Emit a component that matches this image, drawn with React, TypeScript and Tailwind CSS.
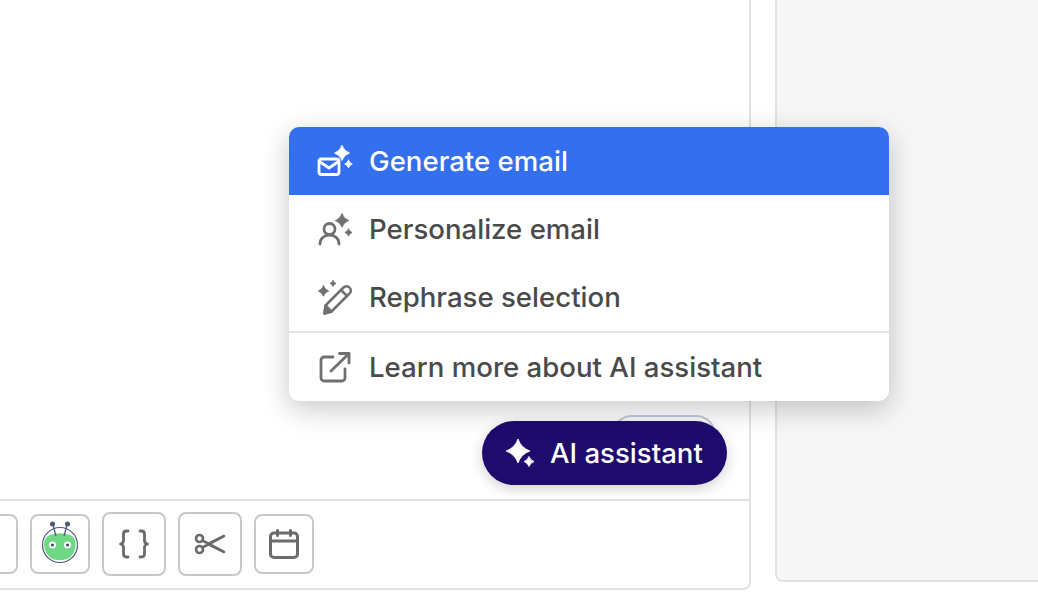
const Sparkle = ({ cx, cy, r }: { cx: number; cy: number; r: number }) => {
  const k = r * 0.26;
  return (
    <path
      d={`M${cx} ${cy - r}Q${cx + k} ${cy - k} ${cx + r} ${cy}Q${cx + k} ${cy + k} ${cx} ${cy + r}Q${cx - k} ${cy + k} ${cx - r} ${cy}Q${cx - k} ${cy - k} ${cx} ${cy - r}Z`}
      fill="currentColor"
      stroke="currentColor"
      strokeWidth="0.8"
      strokeLinejoin="round"
    />
  );
};

const MailIcon = () => (
  <svg width="40" height="40" viewBox="0 0 40 40" fill="none" stroke="currentColor" strokeWidth="2.8" strokeLinecap="round" strokeLinejoin="round" className="shrink-0">
    <rect x="4" y="18" width="20" height="15.5" rx="2.5" />
    <path d="M4.5 20.5 14 27l9.5-6.5" />
    <Sparkle cx={27} cy={12} r={7.5} />
    <Sparkle cx={33.5} cy={23} r={3.8} />
  </svg>
);

const PersonIcon = () => (
  <svg width="40" height="40" viewBox="0 0 40 40" fill="none" stroke="currentColor" strokeWidth="2.8" strokeLinecap="round" strokeLinejoin="round" className="shrink-0">
    <circle cx="14.5" cy="20" r="5.5" />
    <path d="M5 35c0-5.5 4-9 9.5-9s9.5 3.5 9.5 9" />
    <Sparkle cx={27} cy={11.5} r={6.8} />
    <Sparkle cx={33.5} cy={23.5} r={3.6} />
  </svg>
);

const PencilIcon = () => (
  <svg width="40" height="40" viewBox="0 0 40 40" fill="none" stroke="currentColor" strokeWidth="2.5" strokeLinecap="round" strokeLinejoin="round" className="shrink-0">
    <path d="M10.5 28.5 28.5 10.5c1.8-1.8 4.3-1.8 6 0s1.7 4.2 0 6L16.5 34.5l-7 2z" />
    <path d="M26 13l6 6" />
    <path d="M9.5 36.5l1-8 6 6z" fill="currentColor" />
    <Sparkle cx={8.5} cy={14} r={5.2} />
    <Sparkle cx={18} cy={6.5} r={3} />
  </svg>
);

const ExternalIcon = () => (
  <svg width="40" height="40" viewBox="0 0 40 40" fill="none" stroke="currentColor" strokeWidth="2.8" strokeLinecap="round" strokeLinejoin="round" className="shrink-0">
    <path d="M18 10H9a3 3 0 0 0-3 3v18a3 3 0 0 0 3 3h18a3 3 0 0 0 3-3v-9" />
    <path d="M16 24 34 6.5" />
    <path d="M24.5 6.5H34V16" />
  </svg>
);

const menu = [
  { label: "Personalize email", Icon: PersonIcon },
  { label: "Rephrase selection", Icon: PencilIcon },
];

const Robot = () => (
  <svg width="40" height="48" viewBox="0 0 40 48" fill="none">
    <circle cx="20" cy="27" r="17.5" fill="#fff" stroke="#4c5a78" strokeWidth="1.2" />
    <path d="M4 27c0-4 1.5-8 5-9.5 7-3 15-3 22 0 3.5 1.500 5 6 4.500 10-.5 6-3 10-6.500 12.500-6 3-13 3-18 0-3.500-2.500-6.500-7-7-13z" fill="#6fd884" />
    <path d="M13 7l3 11M27 7l-3 11" stroke="#4c5a78" strokeWidth="1.3" />
    <circle cx="12.5" cy="6" r="2.5" fill="#4c5a78" />
    <circle cx="27.5" cy="6" r="2.5" fill="#4c5a78" />
    <circle cx="12.5" cy="27" r="3.5" fill="#fff" />
    <circle cx="27.5" cy="27" r="3.5" fill="#fff" />
    <circle cx="12.5" cy="27" r="1.5" fill="#3b4660" />
    <circle cx="27.5" cy="27" r="1.5" fill="#3b4660" />
  </svg>
);

const Braces = () => (
  <svg width="36" height="36" viewBox="0 0 36 36" fill="none" stroke="#6b6b6b" strokeWidth="2.8" strokeLinecap="round" strokeLinejoin="round">
    <path d="M12 5h-1.500c-2 0-3 1-3 3v6.500c0 2-1 3-3 3.500 2 .5 3 1.500 3 3.500V28c0 2 1 3 3 3H12" />
    <path d="M24 5h1.500c2 0 3 1 3 3v6.500c0 2 1 3 3 3.500-2 .5-3 1.500-3 3.500V28c0 2-1 3-3 3H24" />
  </svg>
);

const ScissorsIcon = () => (
  <svg width="32" height="24" viewBox="0 0 32 24" fill="none" stroke="#6b6b6b" strokeWidth="2.6" strokeLinecap="round" strokeLinejoin="round">
    <circle cx="5.5" cy="6.5" r="3.5" />
    <circle cx="5.5" cy="17.5" r="3.5" />
    <path d="M8.5 8.5 30 20 14 12" />
    <path d="M8.5 15.5 30 4 14 12" />
  </svg>
);

const CalendarIcon = () => (
  <svg width="32" height="32" viewBox="0 0 32 32" fill="none" stroke="#6b6b6b" strokeWidth="3" strokeLinecap="round" strokeLinejoin="round">
    <rect x="2.5" y="5" width="27" height="24.5" rx="3.5" />
    <path d="M2.5 13h27M9.5 2.500v5M22.500 2.500v5" />
  </svg>
);

export default function App() {
  return (
    <div className="flex h-[614px] w-[1038px] overflow-hidden bg-white font-['Inter',sans-serif] relative">
      <div className="relative flex h-[590px] w-[751px] shrink-0 flex-col rounded-br-lg border-r-2 border-b-2 border-[#e2e2e2]">
        <div className="flex-1" />
        <div className="flex h-[89px] items-center gap-3 border-t-2 border-[#e2e2e2] pb-[2px]">
          <div className="-ml-[42px] h-[60px] w-[60px] shrink-0 rounded-lg border-2 border-[#c8c8c8]" />
          <div className="flex h-[60px] w-[60px] shrink-0 items-center justify-center rounded-lg border-2 border-[#c8c8c8] pb-1">
            <Robot />
          </div>
          <div className="flex h-[64px] w-[64px] shrink-0 items-center justify-center rounded-lg border-2 border-[#c8c8c8]">
            <Braces />
          </div>
          <div className="flex h-[64px] w-[64px] shrink-0 items-center justify-center rounded-lg border-2 border-[#c8c8c8]">
            <ScissorsIcon />
          </div>
          <div className="flex h-[60px] w-[60px] shrink-0 items-center justify-center rounded-lg border-2 border-[#c8c8c8]">
            <CalendarIcon />
          </div>
        </div>
      </div>
      <div className="ml-6 h-[582px] flex-1 rounded-bl-lg border-b-2 border-l-2 border-[#e2e2e2] bg-[#f6f6f6]" />

      <div className="absolute left-[612px] top-[415px] h-[40px] w-[104px] rounded-full border-2 border-[#c9c9dc] bg-white" />

      <div className="absolute left-[482px] top-[421px] flex h-[64px] w-[245px] items-center rounded-full bg-[#1f0a6e] pl-[21px] text-[27.6px] font-[550] text-white shadow-[0_4px_14px_rgba(0,0,0,0.18)]">
        <svg width="34" height="34" viewBox="0 0 34 34" className="mr-[13px] shrink-0 text-white">
          <Sparkle cx={15} cy={15} r={12} />
          <Sparkle cx={26} cy={25.5} r={5} />
        </svg>
        <span className="pt-[2px]">AI assistant</span>
      </div>

      <div className="absolute left-[289px] top-[127px] w-[600px] overflow-hidden rounded-[10px] bg-white text-[27.6px] font-[550] text-[#4a4a4a] shadow-[0_8px_28px_rgba(0,0,0,0.22)]">
        <div className="flex h-[68px] items-center gap-[14px] bg-[#336fee] pl-[26px] text-white">
          <MailIcon />
          <span className="pt-[2px]">Generate email</span>
        </div>
        {menu.map(({ label, Icon }) => (
          <div key={label} className="flex h-[68px] items-center gap-[14px] pl-[26px]">
            <span className="text-[#707070]">
              <Icon />
            </span>
            <span className="pt-[2px]">{label}</span>
          </div>
        ))}
        <div className="flex h-[70px] items-center gap-[14px] border-t-2 border-[#e4e4e4] pl-[26px]">
          <span className="text-[#707070]">
            <ExternalIcon />
          </span>
          <span className="pt-[2px]">Learn more about AI assistant</span>
        </div>
      </div>
    </div>
  );
}
